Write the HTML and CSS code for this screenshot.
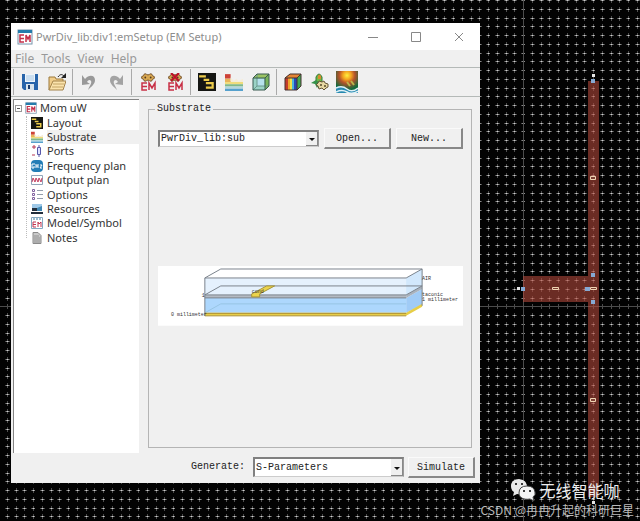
FILE: index.html
```html
<!DOCTYPE html>
<html lang="en">
<head>
<meta charset="utf-8">
<meta name="viewport" content="width=device-width, initial-scale=1">
<title>PwrDiv_lib:div1:emSetup (EM Setup)</title>
<link rel="stylesheet" href="styles.css">
</head>
<body>
<svg class="symbols" aria-hidden="true">
  <symbol id="em" viewBox="0 0 16 16">
    <rect x="1" y="1" width="14" height="14" fill="#fff" stroke="#7793ac"/>
    <path d="M1 1h14v3H1z" fill="#247cac"/>
    <path d="M7 6H3v7h4M3 9.500h4M9 13V6l2 4 2-4v7" fill="none" stroke="#c52f49" stroke-width="1.500"/>
  </symbol>
  <symbol id="layout" viewBox="0 0 16 16">
    <path d="M0 0h16v16H0z" fill="#151613"/>
    <path d="M1 3h6M5 6h5M7 9h6v4H7" fill="none" stroke="#eccb4b" stroke-width="2"/>
  </symbol>
  <symbol id="stack" viewBox="0 0 16 16">
    <path d="M0 1h5v4H0z" fill="#cd4238"/>
    <path d="M0 5h5v2h11v2H0z" fill="#e8b35a"/>
    <path d="M5 4l3 3 2-2 2 2 4-2v3H5z" fill="#f5ecd8"/>
    <path d="M0 8h16v2H0z" fill="#f0dc7c"/>
    <path d="M0 10h16v2H0z" fill="#80b989"/>
    <path d="M0 12h16v2H0z" fill="#b4d7dd"/>
    <path d="M0 14h16v2H0z" fill="#56a1cd"/>
  </symbol>
  <symbol id="gear" viewBox="0 0 18 10">
    <path d="M5 1h2l1 1h2l1-1h2l1 2 2 1v2l-2 1-1 2h-2l-1-1H8L7 9H5L4 7 2 6V4l2-1z" fill="#d9a952" stroke="#6c4722"/>
    <circle cx="6" cy="5" r="1" fill="#573b20"/><circle cx="12" cy="5" r="1" fill="#573b20"/>
  </symbol>
</svg>

<main class="desktop">
  <svg class="canvas" role="img" aria-label="Power divider layout">
    <defs>
      <pattern id="grid" width="35" height="35" patternUnits="userSpaceOnUse">
        <path d="M5 0h5M14 0h5M22 0h5M31 0h4M5 9h5M14 9h5M22 9h5M31 9h4M5 18h5M14 18h5M22 18h5M31 18h4M5 26h5M14 26h5M22 26h5M31 26h4" transform="translate(0 .5)" stroke="#4c4c4c"/>
        <path d="M7 7v5M7 16v5M7 24v5M7 0v3M7 33v2M16 7v5M16 16v5M16 24v5M16 0v3M16 33v2M24 7v5M24 16v5M24 24v5M24 0v3M24 33v2M33 7v5M33 16v5M33 24v5M33 0v3M33 33v2" transform="translate(.5 0)" stroke="#4c4c4c"/>
        <path d="M6 0h3M15 0h3M23 0h3M32 0h3M6 9h3M15 9h3M23 9h3M32 9h3M6 18h3M15 18h3M23 18h3M32 18h3M6 26h3M15 26h3M23 26h3M32 26h3" transform="translate(0 .5)" stroke="#8a8a8a"/>
        <path d="M7 0h1v1H7zM16 0h1v1h-1zM24 0h1v1h-1zM33 0h1v1h-1zM7 9h1v1H7zM16 9h1v1h-1zM24 9h1v1h-1zM33 9h1v1h-1zM7 18h1v1H7zM16 18h1v1h-1zM24 18h1v1h-1zM33 18h1v1h-1zM7 26h1v1H7zM16 26h1v1h-1zM24 26h1v1h-1zM33 26h1v1h-1z" fill="#d0d0d0"/>
      </pattern>
    </defs>
    <rect width="100%" height="100%" fill="#020202"/>
    <rect width="100%" height="100%" fill="url(#grid)"/>
    <path d="M523 0h1v2000h-1zM0 306h3000v1H0z" fill="#4c4c4c"/>
    <path d="M588 81h11v416h-11zM523 276h65v26h-65z" fill="#b34a3c" fill-opacity=".6"/>
    <path d="M591 79h4v4h-4zM591 273h4v4h-4zM591 300h4v4h-4zM521 287h4v4h-4zM585 287h5v4h-5z" fill="#86a9d3"/>
    <path d="M592 74h3v3h-3zM517 287h3v3h-3zM592 501h3v3h-3z" fill="#e5e5e5"/>
    <path d="M590.500 176.500h5v3h-5zM552.500 287.500h6v2h-6zM590.500 287.500h6v2h-6zM590.500 398.500h5v3h-5z" fill="#7c4034" stroke="#f0d5b4"/>
  </svg>

  <section class="window" aria-label="EM Setup">
    <header class="titlebar">
      <svg class="title-icon" aria-hidden="true"><use href="#em"/></svg>
      <h1>PwrDiv_lib:div1:emSetup (EM Setup)</h1>
      <div class="captions">
        <button type="button" aria-label="Minimize"><svg viewBox="0 0 10 10"><path d="M0 5.500h10"/></svg></button>
        <button type="button" aria-label="Maximize"><svg viewBox="0 0 10 10"><path d="M.5.500h9v9h-9z"/></svg></button>
        <button type="button" aria-label="Close"><svg viewBox="0 0 10 10"><path d="M1 1l8 8M9 1L1 9"/></svg></button>
      </div>
    </header>

    <nav class="menubar">
      <button type="button">File</button>
      <button type="button">Tools</button>
      <button type="button">View</button>
      <button type="button">Help</button>
    </nav>

    <div class="toolbar" role="toolbar" aria-label="Main tools">
      <i class="sep"></i>
      <button type="button" aria-label="Save"><svg viewBox="0 0 18 18"><path d="M1 1h16v16H3l-2-2z" fill="#2864aa"/><path d="M4 1h10v8H4z" fill="#eef5fb"/><path d="M5 3h8M5 5h8M5 7h8" stroke="#a8c8e4"/><path d="M5 11h8v6H5z" fill="#dae4ec"/><path d="M7 12h2v4H7z" fill="#1c3c6c"/></svg></button>
      <button type="button" aria-label="Open"><svg viewBox="0 0 18 18"><path d="M1 17V4h6l1 2h7v3" fill="#f0cd8a" stroke="#9b793b"/><path d="M1 17l4-9h13l-3 9z" fill="#fbe3ac" stroke="#a2824a"/><path d="M5 11h11M4 14h11" stroke="#c3a467"/><path d="M10 4c2-3 4-3 6-1" fill="none" stroke="#222"/><path d="M18 0v5h-5z" fill="#222"/></svg></button>
      <i class="sep"></i>
      <button type="button" aria-label="Undo"><svg viewBox="0 0 18 18"><path d="M5 6c4-5 10-4 10 1 0 4-3 6-7 10 2-5 4-7 3-9-1-2-3-1-4 1l3 2-8 1V2z" fill="#999"/></svg></button>
      <button type="button" aria-label="Redo"><svg viewBox="0 0 18 18"><path d="M13 6C9 1 3 2 3 7c0 4 3 6 7 10-2-5-4-7-3-9 1-2 3-1 4 1l-3 2 8 1V2z" fill="#a3a3a3"/></svg></button>
      <i class="sep"></i>
      <button type="button" aria-label="Simulate EM"><svg viewBox="0 0 18 18"><use href="#gear" width="18" height="9"/><path d="M8 10H3v7h5M3 13.500h5M10 17v-7l3 5 3-5v7" fill="none" stroke="#c83046" stroke-width="1.500"/></svg></button>
      <button type="button" aria-label="Stop EM"><svg viewBox="0 0 18 18"><use href="#gear" width="18" height="9"/><path d="M5 0l8 8M13 0L5 8" stroke="#bd1029" stroke-width="2"/><path d="M8 10H3v7h5M3 13.500h5M10 17v-7l3 5 3-5v7" fill="none" stroke="#c83046" stroke-width="1.500"/></svg></button>
      <i class="sep"></i>
      <button type="button" aria-label="Layout"><svg><use href="#layout"/></svg></button>
      <button type="button" aria-label="Substrate"><svg><use href="#stack"/></svg></button>
      <button type="button" aria-label="3D view"><svg viewBox="0 0 18 18"><path d="M1 5l4-4h12v12l-4 4H1z" fill="#9bd3c6"/><path d="M1 5l4-4h12l-4 4z" fill="#9ac363"/><path d="M13 5l4-4v12l-4 4z" fill="#78b35b"/><path d="M5 6h7v7H5z" fill="#b6e1ed"/><path d="M5 1v12h12M1 17l4-4" fill="none" stroke="#6b9a8e"/><path d="M1 5h12v12H1zM1 5l4-4h12v12l-4 4M13 5l4-4" fill="none" stroke="#385a50"/></svg></button>
      <i class="sep"></i>
      <button type="button" aria-label="Field view"><svg viewBox="0 0 18 18"><path d="M1 5l5-4h11v12l-4 4H1z" fill="#c53c2c"/><path d="M4 4h3v13H4z" fill="#eda52e"/><path d="M6 4h2v13H6z" fill="#f1e14a"/><path d="M8 4h2v13H8z" fill="#4eb4d7"/><path d="M10 4h3v13h-3z" fill="#2849b6"/><path d="M13 5l4-4v12l-4 4z" fill="#41a852"/><path d="M1 5l5-4h11l-4 4z" fill="#e38433"/><path d="M1 5h12v12H1zM1 5l5-4h11v12l-4 4M13 5l4-4" fill="none" stroke="#45312e"/></svg></button>
      <button type="button" aria-label="Pattern"><svg viewBox="0 0 18 18"><path d="M5 9V4q3-6 6 0v5" fill="#72b746" stroke="#347c37"/><path d="M7 3q1-3 3 0v3H7z" fill="#d98b2f"/><path d="M0 10l5-3 4 3-3 5-2-4z" fill="#35924a"/><path d="M8 8l3 1 2-1 1 2 3 1v3l-2 1-2 2-2-2-3 1-1-3-2-1 2-2z" fill="#e6d7a3" stroke="#655637"/><circle cx="10" cy="12" r="1" fill="#544829"/><circle cx="14" cy="13" r="1" fill="#544829"/></svg></button>
      <button type="button" class="wide" aria-label="Visualization">
        <svg viewBox="0 0 22 22"><defs><radialGradient id="heat" cx=".5" cy=".2" r=".65"><stop stop-color="#fff03f"/><stop offset=".3" stop-color="#f2a11f"/><stop offset=".55" stop-color="#b5522a"/><stop offset="1" stop-color="#12693c"/></radialGradient></defs><path d="M0 0h22v22H0z" fill="url(#heat)"/><path d="M0 16q6-2 11 2t11 0v4H0z" fill="#278ab1"/><path d="M0 17q6-3 11 1t11-1M0 21q6-3 11 0t11-1" fill="none" stroke="#e0f1f6" stroke-width="1.500"/><path d="M11 11l3 4M15 10l3 4" stroke="#bbb34c" stroke-width="2"/></svg></button>
    </div>

    <div class="workspace">
      <nav class="tree" aria-label="Setup sections">
        <ul>
          <li class="root"><button type="button" class="toggle" aria-label="Collapse"></button><svg aria-hidden="true"><use href="#em"/></svg><a href="#setup">Mom uW</a></li>
          <li><svg aria-hidden="true"><use href="#layout"/></svg><a href="#setup">Layout</a></li>
          <li class="selected"><svg aria-hidden="true"><use href="#stack"/></svg><a href="#setup">Substrate</a></li>
          <li><svg viewBox="0 0 12 12" aria-hidden="true"><path d="M1 2h4M3 0v4M1 10h3" stroke="#b83957"/><path d="M6.500 2.500h3v7h-3zM8 0v3M8 10v2" fill="#e0e2ff" stroke="#5959aa"/></svg><a href="#setup">Ports</a></li>
          <li><svg viewBox="0 0 12 12" aria-hidden="true"><rect width="12" height="12" rx="4" fill="#237db6"/><path d="M4 4H1v4h2V6M5 4v4M5 6h2M7 4v4M9 5h2L9 8h2" fill="none" stroke="#fff"/></svg><a href="#setup">Frequency plan</a></li>
          <li><svg viewBox="0 0 12 12" aria-hidden="true"><path d="M.5 1.500h11v9H.5z" fill="#fff" stroke="#91a5ba"/><path d="M1 8l1-4 2 4 1-4 2 4 1-4 2 4 1-4" fill="none" stroke="#c33f61"/></svg><a href="#setup">Output plan</a></li>
          <li><svg viewBox="0 0 12 12" aria-hidden="true"><path d="M1.500.500h2v2h-2zM1.500 4.500h2v2h-2zM1.500 8.500h2v2h-2z" fill="#fff" stroke="#8062a0"/><path d="M6 1.500h6M6 5.500h6M6 9.500h6" stroke="#949eac"/></svg><a href="#setup">Options</a></li>
          <li><svg viewBox="0 0 12 12" aria-hidden="true"><path d="M1 1h10v7H1z" fill="#9fc9e8"/><path d="M1 5h5v3H1zM0 9h12v2H0z" fill="#222e3d"/><path d="M6 5l5-2v5H6z" fill="#4088b4"/></svg><a href="#setup">Resources</a></li>
          <li><svg viewBox="0 0 12 12" aria-hidden="true"><path d="M.5.500h11v11H.5z" fill="#fff" stroke="#86a9c2"/><path d="M2 2h2M5 2h2M8 2h2" stroke="#397da4"/><path d="M5 5H2v5h3M2 7.500h3M7 10V5l1 2 2-2v5" fill="none" stroke="#c13551"/></svg><a href="#setup">Model/Symbol</a></li>
          <li><svg viewBox="0 0 12 12" aria-hidden="true"><path d="M2 .5h5l3 3v8H2z" fill="#c9c9c9" stroke="#8a8a8a"/><path d="M3 4h5M3 6h6M3 8h6M3 10h6" stroke="#919191"/></svg><a href="#setup">Notes</a></li>
        </ul>
      </nav>

      <form class="panel" id="setup">
        <fieldset>
          <legend>Substrate</legend>
          <div class="picker">
            <div class="combo"><select aria-label="Substrate"><option>PwrDiv_lib:sub</option></select></div>
            <button type="button">Open...</button>
            <button type="button">New...</button>
          </div>
          <div class="preview">
            <svg viewBox="0 0 306 60" role="img" aria-label="Substrate layer stack">
              <path d="M0 0h306v60H0z" fill="#fff"/>
              <path d="M47 12h202l16-9v17l-16 9H47z" fill="#e5f1fd"/>
              <path d="M47 12h202l16-9H63z" fill="#fff"/>
              <path d="M249 12l16-9v17l-16 9z" fill="#d2e8fc"/>
              <path d="M47 32h202v15H47z" fill="#add7fd"/>
              <path d="M249 32l16-9v16l-16 8z" fill="#a0cbf6"/>
              <path d="M47 47l16-9h186" fill="none" stroke="#98c5e4"/>
              <path d="M47 29h202v3H47z" fill="#b3bac3"/>
              <path d="M249 29l16-9v3l-16 9z" fill="#a9b2bd"/>
              <path d="M47 47h202l16-9v3l-16 9H47z" fill="#e7ce48"/>
              <path d="M47 47.500h202M47 50h202" stroke="#ad9036"/>
              <path d="M47 12h202l16-9H63zM47 12v38M265 3v37M47 29l16-9h202M47 29h202l16-9M47 32h202" fill="none" stroke="#7b848d"/>
              <path d="M94 31v-3l15-8h8l-15 8v3z" fill="#ecd44c" stroke="#a8963a"/>
              <g class="layer-labels">
                <text x="94" y="27">cond</text><text x="44" y="31">1</text><text x="13" y="50">0 millimeter</text>
                <text x="265" y="14">AIR</text><text x="265" y="30">taconic</text><text x="265" y="35">1 millimeter</text>
              </g>
            </svg>
          </div>
        </fieldset>
      </form>
    </div>

    <footer class="actions">
      <label for="generate">Generate:</label>
      <div class="combo"><select id="generate"><option>S-Parameters</option></select></div>
      <button type="button">Simulate</button>
    </footer>
  </section>

  <div class="watermark">
    <p class="account">
      <svg viewBox="0 0 26 24" aria-hidden="true"><path d="M9 1C4 1 1 4 1 8q0 4 3 6l-1 4 4-2q8 1 10-5Q18 2 9 1z" fill="#e8e8e8"/><path d="M17 8q-8 0-8 7c0 5 5 7 11 6l4 2-1-4q3-2 2-5-1-6-8-6z" fill="#f4f4f4" stroke="#444"/><circle cx="6" cy="6" r="1"/><circle cx="12" cy="6" r="1"/><circle cx="14" cy="13" r="1"/><circle cx="20" cy="13" r="1"/></svg>
      <span lang="zh-CN">无线智能咖</span>
    </p>
    <p class="credit" lang="zh-CN">CSDN @冉冉升起的科研巨星</p>
  </div>
</main>
</body>
</html>
```
FILE: styles.css
```css
* { box-sizing: border-box; }
body { margin: 0; background: #020202; color: #333; font: 11px/14px "Noto Sans", "Open Sans", sans-serif; }
button, select { margin: 0; font: inherit; color: inherit; }
.symbols { position: absolute; width: 0; height: 0; }

.desktop { position: relative; display: grid; min-height: 100vh; padding: 23px 160px 38px 11px; overflow: hidden; }
.canvas { position: absolute; inset: 0; width: 100%; height: 100%; }

.window { position: relative; display: flex; flex-direction: column; min-width: 0; background: #f0f0f0; }

.titlebar { display: flex; align-items: center; height: 27px; padding-left: 6px; background: #fff; color: #8d8d8d; }
.title-icon { width: 16px; height: 16px; margin-right: 3px; }
.titlebar h1 { flex: 1; margin: 0; font-size: 11px; font-weight: 400; white-space: nowrap; }
.captions { display: flex; }
.captions button { display: grid; place-items: center; width: 43px; height: 27px; padding: 0; border: 0; background: none; }
.captions svg { width: 10px; height: 10px; fill: none; stroke: #888; }

.menubar { display: flex; gap: 7px; height: 17px; padding-left: 4px; }
.menubar button { padding: 0; border: 0; background: none; color: #999; font-size: 12px; line-height: 17px; }

.toolbar { display: flex; align-items: center; height: 30px; border: solid #b4b9b7; border-width: 1px 0; }
.toolbar button { display: grid; place-items: center; width: 27px; height: 28px; padding: 0; border: 0; background: none; }
.toolbar svg { width: 18px; height: 18px; }
.toolbar .wide svg { width: 22px; height: 22px; }
.sep { width: 1px; height: 26px; margin: 0 2px; background: #aaa; }

.workspace { display: flex; flex: 1; gap: 9px; min-height: 0; padding: 2px 8px 0 2px; }
.tree { flex: 0 0 126px; background: #fff; border: solid #858585; border-width: 1px 0 0 1px; }
.tree ul { position: relative; display: flex; flex-direction: column; height: 145px; margin: 0; padding: 1px 0 0; list-style: none; }
.tree ul::before { content: ""; position: absolute; left: 12px; top: 16px; bottom: 7px; border-left: 1px dotted #bbb; }
.tree li { display: flex; flex: 1; align-items: center; gap: 4px; padding-left: 17px; }
.tree li.root { gap: 3px; padding-left: 1px; }
.tree li.selected a { background: #f0f0f0; }
.tree li svg { flex: none; width: 12px; height: 12px; }
.tree a { flex: 1; color: #333; text-decoration: none; white-space: nowrap; }
.toggle { position: relative; width: 7px; height: 7px; padding: 0; border: 1px solid #999; background: #fff; }
.toggle::before { content: ""; position: absolute; left: 1px; right: 1px; top: 2px; height: 1px; background: #555; }

.panel, .actions { font: 10px/12px "Liberation Mono", monospace; color: #222; }
.panel { display: flex; flex: 1; min-width: 0; padding: 4px 0 5px; }
fieldset { display: flex; flex: 1; flex-direction: column; min-width: 0; margin: 0; padding: 13px 8px 0 9px; border: 1px solid #b4b4b4; }
legend { margin-left: -3px; padding: 0 2px; }
.picker { display: flex; align-items: center; gap: 5px; }
.picker .combo { flex: 1; height: 17px; }
.panel button, .actions button { width: 67px; height: 21px; padding: 2px 0 0; border: solid; border-width: 1px 2px 2px 1px; border-color: #fafafa #888 #888 #fafafa; background: #f0f0f0; }

.combo { position: relative; border: solid; border-width: 2px 1px 1px 2px; border-color: #808080 #999 #ccc #808080; background: #fff; }
.combo select { display: block; width: 100%; height: 100%; padding: 0 14px 0 1px; border: 0; background: none; appearance: none; }
.combo::before { content: ""; position: absolute; right: 0; top: 0; bottom: 0; width: 11px; border: solid #888; border-width: 0 1px 1px 0; background: #f0f0f0; }
.combo::after { content: ""; position: absolute; right: 3px; top: 50%; border: 3px solid transparent; border-top-color: #111; border-bottom: 0; transform: translateY(-1px); }

.preview { margin-top: 117px; }
.preview svg { display: block; width: 100%; }
.layer-labels { font: 5px "Liberation Mono", monospace; fill: #333; }

.actions { display: flex; align-items: center; justify-content: flex-end; gap: 4px; height: 30px; padding: 0 5px 2px 0; }
.actions label { margin-right: 4px; }
.actions .combo { flex: 0 1 151px; height: 20px; }

.watermark { position: absolute; right: 6px; bottom: 3px; color: #eee; font: 12px/16px "Noto Sans CJK SC", sans-serif; white-space: nowrap; }
.watermark p { margin: 0; }
.account { display: flex; align-items: center; gap: 4px; padding-left: 29px; font-size: 16px; line-height: 22px; }
.account svg { width: 26px; height: 24px; }
.credit { color: #bbb; text-align: right; }
```
